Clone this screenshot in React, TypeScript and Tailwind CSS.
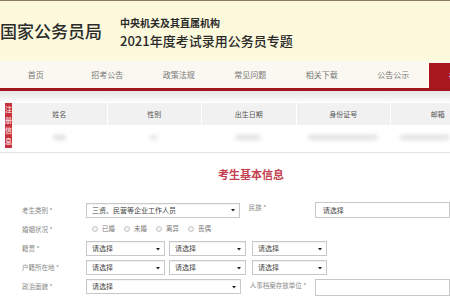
import React from 'react'

const font = { fontFamily: '"Noto Sans CJK SC", "Noto Sans", sans-serif' }

const navItems = ['首页', '招考公告', '政策法规', '常见问题', '相关下载', '公告公示']
const cols = ['姓名', '性别', '出生日期', '身份证号', '邮箱']

const Caret = () => (
  <svg width="4" height="4" viewBox="0 0 4 4" className="shrink-0">
    <path d="M0 1h4L2 3.5z" fill="#222" />
  </svg>
)

const Select = ({ w, text, ml = '' }: { w: string; text: string; ml?: string }) => (
  <div className={`${w} ${ml} h-[15px] border border-[#c8c8c8] bg-white flex items-center justify-between pl-[5px] pr-[4px] text-[7px] text-[#444] shadow-[inset_0_1px_1px_rgba(0,0,0,0.05)]`}>
    <span className="leading-none">{text}</span>
    <Caret />
  </div>
)

const Label = ({ children, w = 'w-[64px]' }: { children: React.ReactNode; w?: string }) => (
  <div className={`${w} shrink-0 text-[6.5px] text-[#888] leading-none whitespace-nowrap`}>{children}</div>
)

const App = () => {
  return (
    <div className="w-[450px] h-[300px] overflow-hidden bg-white" style={font}>
      {/* header */}
      <div className="h-[61px] border-t border-[#8a7d60] bg-[#fcf9dc] flex items-start">
        <div className="mt-[20px] text-[17px] leading-[20px] font-medium text-[#2b2b2b] whitespace-nowrap">国家公务员局</div>
        <div className="ml-[18px] flex flex-col">
          <div className="mt-[16px] text-[10px] leading-[12px] font-bold text-[#2a2a2a]">中央机关及其直属机构</div>
          <div className="mt-[4px] text-[13px] leading-[16px] font-medium text-[#2a2a2a] whitespace-nowrap">2021年度考试录用公务员专题</div>
        </div>
      </div>

      {/* nav */}
      <div className="h-[27px] bg-[#faf8f1] flex items-end">
        {navItems.map((n) => (
          <div key={n} className="w-[71.5px] shrink-0 h-[27px] flex items-center justify-center text-[8px] text-[#777]">{n}</div>
        ))}
        <div className="w-[71.5px] shrink-0 h-[25px] bg-[#a8171e] flex items-center justify-center text-[8px] text-white">在线报名</div>
      </div>
      <div className="h-[3px] bg-[#a3161c]" />
      <div className="h-[11px] bg-gradient-to-b from-[#e6e6e6] to-[#fbfbfb]" />

      {/* registration table */}
      <div className="flex pl-[5px] pt-[1px] pb-[2px] border-b border-[#e2e2e2]">
        <div className="w-[14px] h-[45px] bg-[#c9303c] flex flex-col items-center justify-center gap-[3px] text-[7px] leading-[7.5px] text-white">
          <span>注</span><span>册</span><span>信</span><span>息</span>
        </div>
        <div className="flex flex-col">
          <div className="flex h-[22px] bg-[#f1f1f1]">
            {cols.map((c, i) => (
              <div key={c} className={`w-[94.5px] shrink-0 flex items-center justify-center text-[7px] text-[#555] ${i > 0 ? 'border-l border-white' : ''}`}>{c}</div>
            ))}
          </div>
          <div className="flex h-[25px] items-center">
            <div className="w-[94.5px] shrink-0 flex justify-center"><div className="w-[13px] h-[5px] bg-[#dcdcdc] rounded-full blur-[2px]" /></div>
            <div className="w-[94.5px] shrink-0 flex justify-center"><div className="w-[7px] h-[5px] bg-[#e2e2e2] rounded-full blur-[2px]" /></div>
            <div className="w-[94.5px] shrink-0 flex justify-center"><div className="w-[26px] h-[5px] bg-[#e0e0e0] rounded-full blur-[2px]" /></div>
            <div className="w-[94.5px] shrink-0 flex justify-center"><div className="w-[70px] h-[5px] bg-[#e0e0e0] rounded-full blur-[2px]" /></div>
            <div className="w-[94.5px] shrink-0 flex pl-[10px]"><div className="w-[50px] h-[5px] bg-[#e0e0e0] rounded-full blur-[2px]" /></div>
          </div>
        </div>
      </div>

      {/* title */}
      <div className="pl-[218px] pt-[14px] text-[11px] leading-[14px] font-bold text-[#c4404f]">考生基本信息</div>

      {/* form */}
      <div className="pl-[22px] pt-[21px] flex flex-col">
        <div className="flex items-center h-[16px]">
          <Label>考生类别 *</Label>
          <Select w="w-[159px]" text="三资、民营等企业工作人员" />
          <Label w="w-[66px] ml-[9px] self-start mt-[2px]">民族 *</Label>
          <div className="w-[140px] h-[16px] border border-[#c8c8c8] flex items-center pl-[7px] text-[7px] text-[#444]">请选择</div>
        </div>
        <div className="flex items-center h-[12px] mt-[5px]">
          <Label>婚姻状况 *</Label>
          <div className="flex items-center ml-[6px]">
            {['已婚', '未婚', '离异', '丧偶'].map((r) => (
              <div key={r} className="w-[32px] flex items-center gap-[4px]">
                <div className="w-[6px] h-[6px] rounded-full border border-[#c4c4c4] bg-[#f4f4f4]" />
                <span className="text-[6.5px] text-[#777]">{r}</span>
              </div>
            ))}
          </div>
        </div>
        <div className="flex items-center mt-[6px]">
          <Label>籍贯 *</Label>
          <Select w="w-[79px]" text="请选择" />
          <Select w="w-[77px]" ml="ml-[4px]" text="请选择" />
          <Select w="w-[75px]" ml="ml-[6px]" text="请选择" />
        </div>
        <div className="flex items-center mt-[4px]">
          <Label>户籍所在地 *</Label>
          <Select w="w-[79px]" text="请选择" />
          <Select w="w-[77px]" ml="ml-[4px]" text="请选择" />
          <Select w="w-[75px]" ml="ml-[6px]" text="请选择" />
        </div>
        <div className="flex items-start mt-[4px]">
          <Label w="w-[64px] mt-[4px]">政治面貌 *</Label>
          <Select w="w-[160px]" text="请选择" />
          <Label w="w-[65px] ml-[9px] mt-[3px]">人事档案存放单位 *</Label>
          <div className="w-[140px] h-[17px] border border-[#c8c8c8]" />
        </div>
      </div>
    </div>
  )
}

export default App
